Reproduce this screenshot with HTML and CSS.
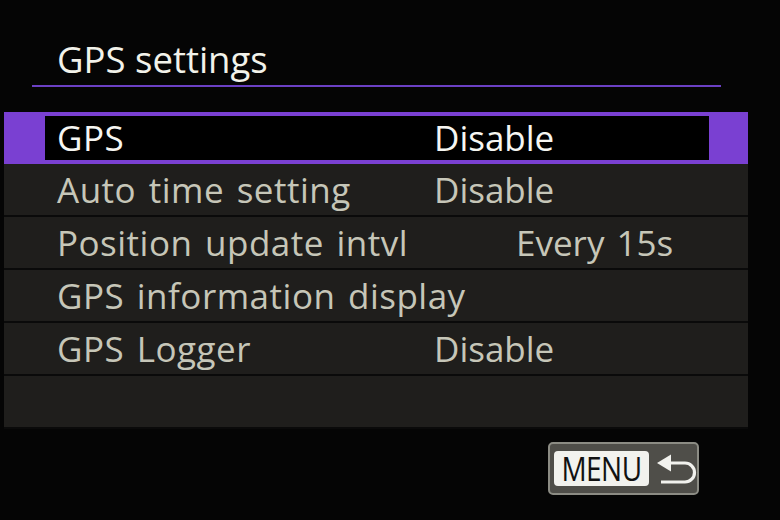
FILE: index.html
```html
<!DOCTYPE html>
<html>
<head>
<meta charset="utf-8">
<link rel="stylesheet" href="styles.css">
</head>
<body>
<div class="screen">
  <div class="title-bar"><h1 class="title">GPS settings</h1></div>
  <div class="menu-list">
    <div class="row row--selected">
      <div class="row-inner">
        <span class="label">GPS</span><span class="value">Disable</span>
      </div>
    </div>
    <div class="row"><span class="label">Auto time setting</span><span class="value">Disable</span></div>
    <div class="row"><span class="label">Position update intvl</span><span class="value value--far">Every 15s</span></div>
    <div class="row"><span class="label">GPS information display</span></div>
    <div class="row"><span class="label">GPS Logger</span><span class="value">Disable</span></div>
    <div class="row row--empty"></div>
  </div>
  <div class="footer">
    <div class="menu-btn">
      <span class="menu-label"><span class="menu-text">MENU</span></span>
      <svg class="back-icon" width="40" height="32" viewBox="0 0 40 32">
        <polygon points="0,10 14,1.5 14,18.5" fill="#f2f2ee"/>
        <path d="M12 10 H28 A9.5 9.5 0 0 1 28 29 H4" fill="none" stroke="#f2f2ee" stroke-width="3.2"/>
      </svg>
    </div>
  </div>
</div>
</body>
</html>
```
FILE: styles.css
```css
html, body {
  margin: 0;
  padding: 0;
  background: #050505;
}
body {
  width: 780px;
  height: 520px;
  overflow: hidden;
  font-family: "Open Sans", "Noto Sans", sans-serif;
}
.screen {
  padding-top: 34px;
}
.title-bar {
  margin-left: 32px;
  width: 689px;
  border-bottom: 2px solid #6b40c4;
}
.title {
  margin: 0;
  padding-left: 25px;
  font-size: 36.5px;
  font-weight: 400;
  line-height: 51px;
  color: #f2f2ea;
}
.menu-list {
  margin-top: 25px;
  margin-left: 4px;
  width: 744px;
}
.row {
  display: flex;
  height: 51px;
  border-bottom: 2px solid #0a0a0a;
  background: #1f1e1c;
  padding-left: 53px;
  font-size: 35px;
  line-height: 51px;
  letter-spacing: 0.5px;
  word-spacing: 3px;
  color: #c6c6b8;
}
.row--selected {
  height: 44px;
  padding: 4px 39px 4px 41px;
  background: #7a40d2;
  border-bottom: none;
}
.row-inner {
  flex: 1;
  display: flex;
  background: #000;
  padding-left: 12px;
  line-height: 44px;
  color: #f6f6f2;
}
.label {
  width: 377px;
  white-space: nowrap;
}
.value {
  white-space: nowrap;
  letter-spacing: 0;
}
.value--far {
  margin-left: 82px;
}
.footer {
  display: flex;
  justify-content: flex-end;
  padding-right: 81px;
  margin-top: 13px;
}
.menu-btn {
  display: flex;
  align-items: center;
  gap: 6px;
  box-sizing: border-box;
  width: 151px;
  height: 53px;
  padding-left: 4px;
  border: 2px solid #8c8c84;
  border-radius: 5px;
  background: #4f4e49;
}
.menu-label {
  display: flex;
  align-items: center;
  justify-content: center;
  width: 95px;
  height: 35px;
  background: #f2f2ee;
  border-radius: 4px;
}
.menu-text {
  display: inline-block;
  font-size: 28px;
  font-weight: 500;
  line-height: 35px;
  color: #111;
  transform: scaleY(1.2);
  letter-spacing: -0.5px;
}
.back-icon {
  display: block;
  margin-left: 2px;
}
```
